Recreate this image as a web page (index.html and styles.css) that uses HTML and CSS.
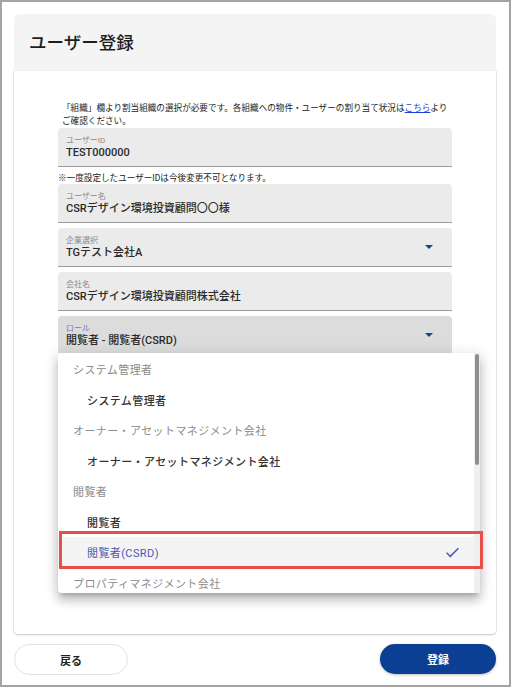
FILE: index.html
```html
<!DOCTYPE html>
<html lang="ja">
<head>
<meta charset="utf-8">
<title>ユーザー登録</title>
<link rel="stylesheet" href="styles.css">
</head>
<body>
<div class="frame">
  <header class="page-head">
    <h1 class="title">ユーザー登録</h1>
  </header>
  <main class="card">
    <p class="notice">「組織」欄より割当組織の選択が必要です。各組織への物件・ユーザーの割り当て状況は<a href="#" class="link">こちら</a>より<br>ご確認ください。</p>
    <div class="field">
      <span class="label">ユーザーID</span>
      <span class="value">TEST000000</span>
    </div>
    <p class="hint">※一度設定したユーザーIDは今後変更不可となります。</p>
    <div class="field">
      <span class="label">ユーザー名</span>
      <span class="value">CSRデザイン環境投資顧問〇〇様</span>
    </div>
    <div class="field select">
      <span class="label">企業選択</span>
      <span class="value">TGテスト会社A</span>
      <span class="arrow"></span>
    </div>
    <div class="field">
      <span class="label">会社名</span>
      <span class="value">CSRデザイン環境投資顧問株式会社</span>
    </div>
    <div class="field select focused">
      <span class="label">ロール</span>
      <span class="value">閲覧者 - 閲覧者(CSRD)</span>
      <span class="arrow"></span>
      <div class="menu">
        <ul class="list">
          <li class="group">システム管理者</li>
          <li class="option">システム管理者</li>
          <li class="group">オーナー・アセットマネジメント会社</li>
          <li class="option">オーナー・アセットマネジメント会社</li>
          <li class="group">閲覧者</li>
          <li class="option">閲覧者</li>
          <li class="option selected">閲覧者(CSRD)
            <svg class="check" viewBox="0 0 16 12" width="15" height="11"><path d="M1.5 6.2 L5.6 10.2 L14.5 1.3" fill="none" stroke="#4a58b8" stroke-width="1.6"/></svg>
          </li>
          <li class="group">プロパティマネジメント会社</li>
        </ul>
        <span class="scroll-track"><span class="scroll-thumb"></span></span>
        <span class="highlight"></span>
      </div>
    </div>
  </main>
  <footer class="actions">
    <button class="btn back">戻る</button>
    <button class="btn submit">登録</button>
  </footer>
</div>
</body>
</html>
```

FILE: styles.css
```css
* { box-sizing: border-box; }
html, body { margin: 0; padding: 0; background: #fff; }
body {
  font-family: Roboto, "Noto Sans CJK JP", sans-serif;
  color: #222;
}
.frame {
  width: 511px;
  height: 687px;
  border: 2px solid #a4a4a4;
  padding: 12px 13px 10px 12px;
  display: flex;
  flex-direction: column;
}
.page-head {
  height: 57px;
  background: #f4f4f4;
  border-radius: 6px 6px 0 0;
  display: flex;
  align-items: center;
  padding-left: 15px;
  padding-bottom: 2px;
}
.title {
  margin: 0;
  font-size: 17.5px;
  font-weight: 500;
  color: #1e1e1e;
}
.card {
  height: 563px;
  background: #fff;
  border-radius: 0 0 4px 4px;
  box-shadow: 0 1px 2px rgba(0,0,0,0.18), 0 0 0 1px #f0f0f0;
  padding: 31px 44px 0 44px;
  display: flex;
  flex-direction: column;
  gap: 5px;
}
.notice {
  margin: 0 0 -5px 0;
  padding-left: 4px;
  font-size: 8.6px;
  line-height: 13px;
  color: #222;
}
.link { color: #1f3fd8; text-decoration: underline; }
.hint {
  margin: -5px 0 -5px 0;
  padding: 5px 0 0 0;
  height: 17px;
  font-size: 8.6px;
  line-height: 12px;
  color: #222;
}
.field {
  position: relative;
  height: 39px;
  background: #ebebeb;
  border-radius: 4px 4px 0 0;
  border-bottom: 1px solid #9c9c9c;
  padding: 8px 8px 0 8px;
  display: flex;
  flex-direction: column;
}
.label {
  font-size: 8px;
  line-height: 10px;
  color: #8a8a8a;
}
.value {
  font-size: 11px;
  line-height: 14px;
  font-weight: 500;
  color: #2a2a2a;
}
.arrow {
  position: absolute;
  right: 19px;
  top: 17px;
  width: 0;
  height: 0;
  border-left: 4px solid transparent;
  border-right: 4px solid transparent;
  border-top: 4px solid #1d3f96;
}
.focused {
  background: #dcdcdc;
  border-bottom: 2px solid #5465c0;
}
.focused .label { color: #6f7ac0; }
.menu {
  position: absolute;
  left: 0;
  top: 100%;
  width: 422px;
  height: 240px;
  background: #fff;
  border-radius: 0 0 4px 4px;
  box-shadow: 0 5px 5px -3px rgba(0,0,0,0.2), 0 8px 10px 1px rgba(0,0,0,0.14), 0 3px 14px 2px rgba(0,0,0,0.12);
  z-index: 5;
}
.list {
  margin: 0;
  padding: 1px 6px 0 0;
  height: 240px;
  overflow: hidden;
  list-style: none;
}
.list li {
  height: 30.5px;
  flex-shrink: 0;
  display: flex;
  align-items: center;
  font-size: 11px;
  letter-spacing: 0.4px;
}
.scroll-track {
  position: absolute;
  right: 0;
  top: 0;
  bottom: 0;
  width: 6px;
  background: #efefef;
}
.scroll-thumb {
  position: absolute;
  left: 1px;
  right: 1px;
  top: 1px;
  height: 111px;
  border-radius: 2px;
  background: #8e8e8e;
}
.highlight {
  position: absolute;
  left: 1px;
  width: 424px;
  top: 178px;
  height: 38px;
  border: 3px solid #e5504d;
  pointer-events: none;
}
.group {
  padding-left: 15px;
  color: #8c8c8c;
}
.option {
  padding-left: 29px;
  color: #333;
  font-weight: 500;
}
.option.selected {
  background: #f4f4f4;
  color: #4a58b8;
  font-weight: 400;
  justify-content: space-between;
  padding-right: 14px;
}
.actions {
  margin-top: 10px;
  display: flex;
  justify-content: space-between;
  align-items: flex-start;
}
.btn {
  font-family: Roboto, "Noto Sans CJK JP", sans-serif;
  font-size: 11px;
  font-weight: 700;
  height: 31px;
  border-radius: 16px;
  cursor: pointer;
}
.back {
  width: 114px;
  background: #fff;
  border: 1px solid #e2e2e2;
  color: #222;
}
.submit {
  width: 116px;
  height: 30px;
  background: #0b3f94;
  border: none;
  color: #fff;
  box-shadow: 0 1px 3px rgba(0,0,0,0.25);
}
```
